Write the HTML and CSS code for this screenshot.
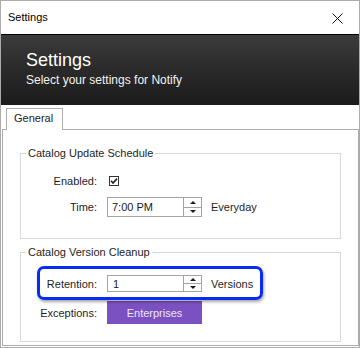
FILE: index.html
```html
<!DOCTYPE html>
<html>
<head>
<meta charset="utf-8">
<link rel="stylesheet" href="styles.css">
</head>
<body>
<div class="window">
  <div class="titlebar">
    <span class="titlebar-text">Settings</span>
    <svg class="close" width="11" height="11" viewBox="0 0 11 11"><path d="M0.5 0.5 L10.5 10.5 M10.5 0.5 L0.5 10.5" stroke="#111" stroke-width="1" fill="none"/></svg>
  </div>
  <div class="header">
    <div class="header-title">Settings</div>
    <div class="header-sub">Select your settings for Notify</div>
  </div>
  <div class="tabs">
    <div class="tab">General</div>
  </div>
  <div class="page">
    <fieldset class="group group-schedule">
      <legend>Catalog Update Schedule</legend>
      <div class="row row-enabled">
        <span class="lbl">Enabled:</span>
        <svg class="checkbox" width="10" height="10" viewBox="0 0 10 10"><rect x="0.5" y="0.5" width="9" height="9" fill="#fff" stroke="#333"/><path d="M2 4.8 L4 7 L8 2.6" stroke="#222" stroke-width="1.6" fill="none"/></svg>
      </div>
      <div class="row row-time">
        <span class="lbl">Time:</span>
        <div class="spin spin-time">
          <span class="spin-value">7:00 PM</span>
          <span class="spin-buttons">
            <span class="spin-up"><i class="arrow-up"></i></span>
            <span class="spin-down"><i class="arrow-down"></i></span>
          </span>
        </div>
        <span class="unit">Everyday</span>
      </div>
    </fieldset>
    <fieldset class="group group-cleanup">
      <legend>Catalog Version Cleanup</legend>
      <div class="row row-retention">
        <span class="highlight"></span>
        <span class="lbl">Retention:</span>
        <div class="spin spin-retention">
          <span class="spin-value">1</span>
          <span class="spin-buttons">
            <span class="spin-up"><i class="arrow-up"></i></span>
            <span class="spin-down"><i class="arrow-down"></i></span>
          </span>
        </div>
        <span class="unit">Versions</span>
      </div>
      <div class="row row-exceptions">
        <span class="lbl">Exceptions:</span>
        <span class="btn-purple">Enterprises</span>
      </div>
    </fieldset>
  </div>
</div>
</body>
</html>
```
FILE: styles.css
```css
* { box-sizing: border-box; }
html, body { margin: 0; padding: 0; background: #fff; }
body { font-family: "Liberation Sans", Arial, sans-serif; font-size: 11px; color: #1e1e1e; }

.window {
  width: 360px;
  height: 348px;
  border: 1px solid #ababab;
  display: flex;
  flex-direction: column;
  background: #fff;
  overflow: hidden;
}

.titlebar {
  height: 34px;
  border-bottom: 1px solid #000;
  display: flex;
  align-items: center;
  justify-content: space-between;
  padding: 0 16px 0 7px;
  flex: none;
}
.titlebar-text { line-height: 33px; font-size: 11px; color: #000; }
.close { display: block; margin-top: 1px; }

.header {
  height: 70px;
  flex: none;
  background: linear-gradient(180deg, #3b3b3b 0%, #2a2a2a 50%, #1b1b1b 100%);
  padding: 15px 0 0 25px;
  color: #fff;
}
.header-title { font-size: 18px; line-height: 20px; }
.header-sub { font-size: 12px; line-height: 14px; margin-top: 3px; color: #f2f2f2; }

.tabs {
  flex: none;
  padding: 3px 0 0 5px;
  display: flex;
}
.tab {
  position: relative;
  z-index: 1;
  width: 57px;
  height: 22px;
  margin-bottom: -1px;
  border: 1px solid #adadad;
  border-bottom: none;
  background: #fff;
  padding-left: 7px;
  line-height: 19px;
  color: #1a1a1a;
}

.page {
  flex: 1;
  margin: 0 0 1px 1px;
  border: 1px solid #adadad;
  background: #fff;
  padding: 0 17px 0 17px;
  display: flex;
  flex-direction: column;
}

.group {
  margin: 0;
  padding: 0;
  border: 1px solid #d9d9d9;
  min-width: 0;
}
.group legend {
  margin-left: 5px;
  padding: 0 2px;
  line-height: 13px;
  font-size: 11px;
  color: #1e1e1e;
}
.group-schedule {
  margin-top: 17px;
  padding: 11px 0 21px 0;
  display: flex;
  flex-direction: column;
  gap: 6px;
}
.group-cleanup {
  margin-top: 7px;
  padding: 16px 0 17px 0;
  display: flex;
  flex-direction: column;
  gap: 9px;
}

.row {
  display: flex;
  align-items: center;
  gap: 10px;
}
.row-enabled, .row-time { height: 20px; }
.row-retention { height: 17px; position: relative; }
.row-exceptions { height: 23px; }

.lbl {
  width: 76px;
  text-align: right;
  color: #1e1e1e;
  position: relative;
}
.checkbox { display: block; margin-left: 2px; }

.spin {
  width: 95px;
  border: 1px solid #a3a3a3;
  display: flex;
  background: #fff;
  position: relative;
}
.spin-time { height: 20px; }
.spin-retention { height: 17px; }
.spin-value {
  flex: 1;
  padding-left: 4px;
  display: flex;
  align-items: center;
  color: #1a1a1a;
}
.spin-retention .spin-value { padding-left: 5px; }
.spin-buttons {
  width: 18px;
  border-left: 1px solid #a3a3a3;
  display: flex;
  flex-direction: column;
}
.spin-up, .spin-down {
  flex: 1;
  display: flex;
  align-items: center;
  justify-content: center;
}
.spin-up { border-bottom: 1px solid #a3a3a3; }
.arrow-up {
  width: 0; height: 0;
  border-left: 3px solid transparent;
  border-right: 3px solid transparent;
  border-bottom: 3px solid #1a1a1a;
}
.arrow-down {
  width: 0; height: 0;
  border-left: 3px solid transparent;
  border-right: 3px solid transparent;
  border-top: 3px solid #1a1a1a;
}
.unit { margin-left: -1px; color: #1e1e1e; }

.highlight {
  position: absolute;
  left: 16px;
  top: -9px;
  width: 226px;
  height: 34px;
  border: 3px solid #0a2bf2;
  border-radius: 7px;
  box-shadow: 1px 2px 3px rgba(0, 0, 0, 0.35);
  pointer-events: none;
}

.btn-purple {
  width: 95px;
  height: 23px;
  background: #7b51c1;
  color: #ece6f6;
  display: flex;
  align-items: center;
  justify-content: center;
}
```
